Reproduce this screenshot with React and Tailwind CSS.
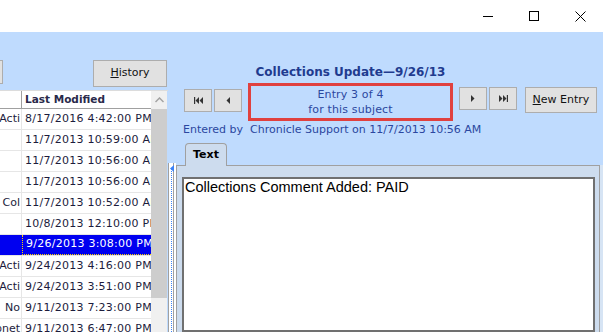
import React from "react";

const rows = [
  { left: "Acti", date: "8/17/2016 4:42:00 PM" },
  { left: "", date: "11/7/2013 10:59:00 AM" },
  { left: "", date: "11/7/2013 10:56:00 AM" },
  { left: "", date: "11/7/2013 10:56:00 AM" },
  { left: "Col", date: "11/7/2013 10:52:00 AM" },
  { left: "", date: "10/8/2013 12:10:00 PM" },
  { left: "", date: "9/26/2013 3:08:00 PM", selected: true },
  { left: "Acti", date: "9/24/2013 4:16:00 PM" },
  { left: "Acti", date: "9/24/2013 3:51:00 PM" },
  { left: "No", date: "9/11/2013 7:23:00 PM" },
  { left: "pnet", date: "9/11/2013 6:47:00 PM" },
];

function NavButton({ children, className = "" }) {
  return (
    <div
      className={
        "flex items-center justify-center w-[28px] h-[23px] bg-[#e1e1e1] border border-[#adadad] text-[#333] " +
        className
      }
    >
      {children}
    </div>
  );
}

function FirstIcon() {
  return (
    <svg width="9" height="7" viewBox="0 0 9 7" fill="#333">
      <rect x="0" y="0" width="1.2" height="7" />
      <path d="M5 0 L1.5 3.5 L5 7Z M9 0 L5.5 3.5 L9 7Z" />
    </svg>
  );
}
function LastIcon() {
  return (
    <svg width="9" height="7" viewBox="0 0 9 7" fill="#333">
      <rect x="7.8" y="0" width="1.2" height="7" />
      <path d="M0 0 L3.5 3.5 L0 7Z M4 0 L7.5 3.5 L4 7Z" />
    </svg>
  );
}
function PrevIcon() {
  return (
    <svg width="4" height="7" viewBox="0 0 4 7" fill="#333">
      <path d="M4 0 L0.5 3.5 L4 7Z" />
    </svg>
  );
}
function NextIcon() {
  return (
    <svg width="4" height="7" viewBox="0 0 4 7" fill="#333">
      <path d="M0 0 L3.5 3.5 L0 7Z" />
    </svg>
  );
}

export default function App() {
  return (
    <div
      className="w-[603px] h-[332px] overflow-hidden flex flex-col bg-white"
      style={{ fontFamily: '"DejaVu Sans", Verdana, sans-serif' }}
    >
      {/* Title bar */}
      <div className="h-[32px] shrink-0 bg-white flex justify-end">
        <div className="w-[46px] flex items-center justify-center">
          <svg width="10" height="10" viewBox="0 0 10 10">
            <line x1="0" y1="5.5" x2="10" y2="5.5" stroke="#000" strokeWidth="1" />
          </svg>
        </div>
        <div className="w-[46px] flex items-center justify-center">
          <svg width="10" height="10" viewBox="0 0 10 10">
            <rect x="0.5" y="0.5" width="9" height="9" fill="none" stroke="#000" strokeWidth="1" />
          </svg>
        </div>
        <div className="w-[46px] flex items-center justify-center">
          <svg width="11" height="11" viewBox="0 0 11 11">
            <path d="M0.5 0.5 L10.5 10.5 M10.5 0.5 L0.5 10.5" stroke="#000" strokeWidth="1" />
          </svg>
        </div>
      </div>

      {/* Body */}
      <div className="flex-1 flex bg-[#bfdbfe] min-h-0">
        {/* Left panel */}
        <div className="w-[168px] shrink-0 flex flex-col">
          <div className="h-[58px] flex items-start pt-[28px] gap-[90px]">
            <div className="w-[40px] -ml-[37px] h-[24px] bg-[#e1e1e1] border border-[#adadad]" />
            <div className="w-[74px] h-[27px] bg-[#e1e1e1] border border-[#adadad] flex items-center justify-center text-[11px] text-[#111]">
              <span>
                <span className="underline">H</span>istory
              </span>
            </div>
          </div>
          <div className="flex-1 flex min-h-0 border-t border-[#dcdcdc]">
            <div className="w-[151px] bg-white flex flex-col overflow-hidden">
              <div className="h-[18px] shrink-0 flex border-b border-[#a0a0a0]">
                <div className="w-[22px] border-r border-[#a0a0a0]" />
                <div className="pl-[3px] flex items-center text-[10.5px] font-bold text-[#2a2a4a] whitespace-nowrap">
                  Last Modified
                </div>
              </div>
              {rows.map((r, i) => (
                <div
                  key={i}
                  className={
                    "h-[21px] shrink-0 flex border-b border-[#e6e6e6] " +
                    (r.selected ? "bg-[#0000f0] text-white" : "text-[#1c1c3c]")
                  }
                >
                  <div
                    className={
                      "w-[22px] shrink-0 flex items-center justify-end pr-[1px] overflow-hidden whitespace-nowrap text-[11px] " +
                      (r.selected ? "" : "border-r border-[#e6e6e6]")
                    }
                  >
                    {r.left}
                  </div>
                  <div
                    className={
                      "flex-1 flex items-center pl-[3px] overflow-hidden whitespace-nowrap text-[11px] tracking-[0.25px] " +
                      (r.selected ? "border-l border-b border-dotted border-[#ffd400]" : "")
                    }
                  >
                    {r.date}
                  </div>
                </div>
              ))}
            </div>
            {/* Scrollbar */}
            <div className="w-[16px] flex flex-col bg-[#f0f0f0]">
              <div className="h-[18px] flex items-center justify-center">
                <svg width="9" height="6" viewBox="0 0 9 6">
                  <path d="M0.5 5 L4.5 1 L8.5 5" fill="none" stroke="#a3a3a3" strokeWidth="1.5" />
                </svg>
              </div>
              <div className="h-[189px] bg-[#cdcdcd]" />
            </div>
          </div>
        </div>

        {/* Splitter column */}
        <div className="w-[8px] shrink-0 flex flex-col">
          <div className="h-[131px]" />
          <div className="flex-1 border-l border-[#a0a0a0] bg-white relative flex">
            <div className="ml-[2px] mt-[6px] h-full border-l border-dotted border-[#3b82f6]" />
            <svg className="absolute left-[1px] top-[2px]" width="4" height="7" viewBox="0 0 4 7">
              <path d="M4 0 L0 3.5 L4 7Z" fill="#3b82f6" />
            </svg>
            <div className="ml-[1px] h-full border-l border-[#a0a0a0]" />
          </div>
        </div>

        {/* Right panel */}
        <div className="flex-1 flex flex-col min-w-0">
          <div className="pt-[32px] pl-[8px]">
            <div className="w-[333px] h-[16px] flex items-center justify-center text-[12px] font-bold text-[#1f3b8f] whitespace-nowrap">
              Collections Update—9/26/13
            </div>
          </div>
          <div className="mt-[3px] pl-[8px] h-[38px] flex items-start">
            <NavButton className="mt-[6px]">
              <FirstIcon />
            </NavButton>
            <NavButton className="mt-[6px] ml-[2px]">
              <PrevIcon />
            </NavButton>
            <div className="ml-[6px] w-[205px] h-[38px] border-[3px] border-[#e0413f] flex flex-col items-center justify-center text-[11px] leading-[15px] tracking-[0.15px] text-[#2b47a0]">
              <div>Entry 3 of 4</div>
              <div>for this subject</div>
            </div>
            <NavButton className="mt-[4px] ml-[6px] h-[22px]">
              <NextIcon />
            </NavButton>
            <NavButton className="mt-[4px] ml-[2px] h-[22px]">
              <LastIcon />
            </NavButton>
            <div className="ml-[8px] mt-[4px] w-[72px] h-[26px] bg-[#e1e1e1] border border-[#adadad] flex items-center justify-center text-[11px] text-[#111] whitespace-nowrap">
              <span>
                <span className="underline">N</span>ew Entry
              </span>
            </div>
          </div>
          <div className="mt-[2px] pl-[7px] h-[14px] flex items-center text-[11px] text-[#2b47a0] whitespace-nowrap">
            Entered by&nbsp; Chronicle Support on 11/7/2013 10:56 AM
          </div>
          <div className="mt-[6px] pl-[9px] flex relative z-10">
            <div className="w-[42px] h-[23px] -mb-px bg-[#cddcee] border border-b-0 border-[#a0a0a0] rounded-t-[4px] flex items-center justify-center text-[11px] font-bold text-black">
              Text
            </div>
          </div>
          <div className="flex-1 flex min-h-0">
            <div className="w-[424px] h-full bg-[#cddcee] border-l border-t border-r border-[#a0a0a0] pl-[5px] pr-[4px] pt-[11px] flex">
              <div className="flex-1 bg-white border-2 border-[#707070] pl-[1px] text-[14.5px] leading-[14px] text-black" style={{ fontFamily: '"Liberation Sans", Arial, sans-serif' }}>
                <div className="pt-[1px]">Collections Comment Added: PAID</div>
              </div>
            </div>
            <div className="flex-1 bg-[#d6e4f4]" />
          </div>
        </div>
      </div>
    </div>
  );
}
